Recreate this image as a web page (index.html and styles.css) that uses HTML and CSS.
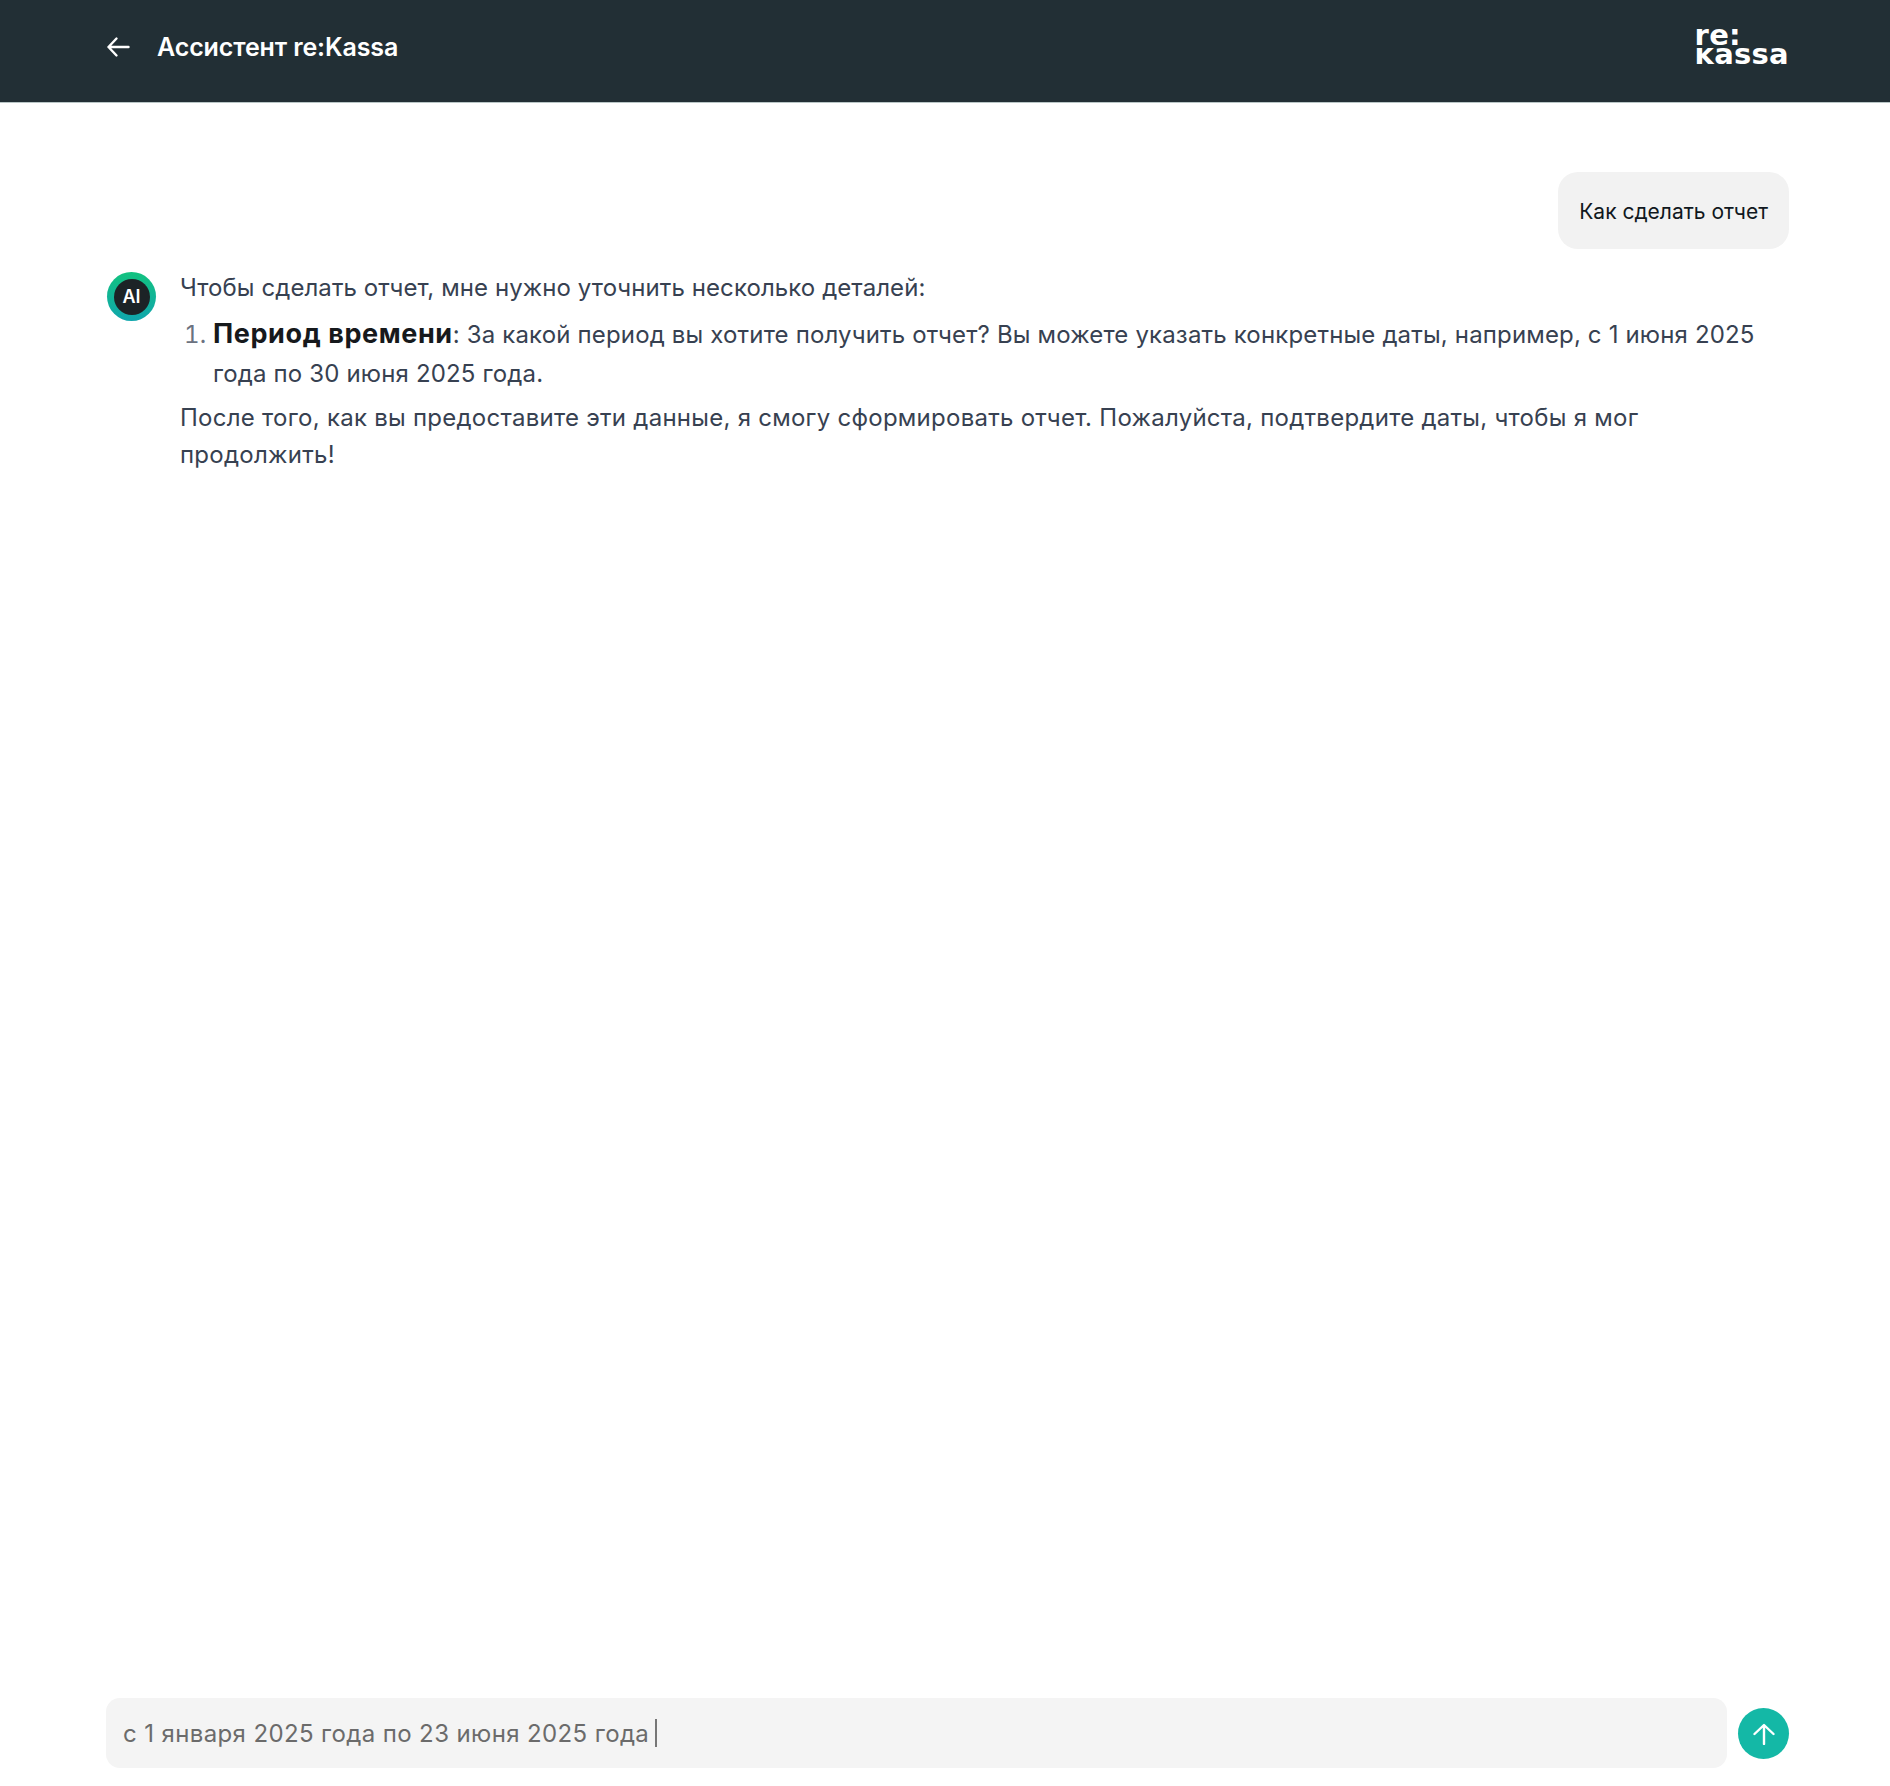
FILE: index.html
```html
<!DOCTYPE html>
<html lang="ru">
<head>
<meta charset="utf-8">
<title>Ассистент re:Kassa</title>
<link rel="stylesheet" href="styles.css">
</head>
<body>
<div class="app">
  <header class="topbar">
    <div class="topbar-left">
      <svg class="back" viewBox="0 0 24 24" width="24" height="24" fill="none" stroke="#fff" stroke-width="2.4" stroke-linecap="round" stroke-linejoin="round"><path d="M22.5 12H2.5M10.5 3.5L2.5 12l8 8.5"/></svg>
      <span class="title">Ассистент re:Kassa</span>
    </div>
    <div class="logo"><span class="logo-line">re:</span><span class="logo-line"><span class="logo-k">k</span>assa</span></div>
  </header>
  <main class="chat">
    <div class="user-row"><div class="bubble">Как сделать отчет</div></div>
    <div class="bot-row">
      <div class="avatar"><span class="avatar-inner">AI</span></div>
      <div class="answer">
        <p class="lead">Чтобы сделать отчет, мне нужно уточнить несколько деталей:</p>
        <ol class="steps">
          <li><strong>Период времени</strong>: За какой период вы хотите получить отчет? Вы можете указать конкретные даты, например, с 1 июня 2025 года по 30 июня 2025 года.</li>
        </ol>
        <p class="tail">После того, как вы предоставите эти данные, я смогу сформировать отчет. Пожалуйста, подтвердите даты, чтобы я мог продолжить!</p>
      </div>
    </div>
  </main>
  <footer class="composer">
    <div class="field"><span>с 1 января 2025 года по 23 июня 2025 года</span><i class="caret"></i></div>
    <button class="send" type="button" aria-label="Отправить">
      <svg viewBox="0 0 24 24" width="24" height="24" fill="none" stroke="#fff" stroke-width="2.4" stroke-linecap="round" stroke-linejoin="round"><path d="M12 23V5M2.5 13L12 4l9.5 9"/></svg>
    </button>
  </footer>
</div>
</body>
</html>
```
FILE: styles.css
```css
* { box-sizing: border-box; }
html, body { margin: 0; padding: 0; background: #fff; }
body { font-family: Inter, "Noto Sans", sans-serif; color: #374151; }
.app { display: flex; flex-direction: column; height: 1786px; }
.topbar {
  height: 103px; flex: none; background: #222f35; border-bottom: 1px solid #b9c6c6;
  padding: 0 101px 0 106px; display: flex; justify-content: space-between; align-items: flex-start;
}
.topbar-left { display: flex; align-items: center; height: 94px; gap: 27px; }
.back { display: block; }
.title { color: #fff; font-size: 25px; font-weight: 600; letter-spacing: -0.12px; }
.logo {
  display: flex; flex-direction: column; color: #fff; font-family: "DejaVu Sans", sans-serif;
  font-weight: 700; font-size: 29px; line-height: 19px; padding-top: 26px; letter-spacing: 0.3px;
}
.logo-line { display: block; height: 19px; }
.logo-k { display: inline-block; clip-path: inset(3px -2px -6px -2px); }
.chat { flex: 1; padding: 69px 101px 0 106px; display: flex; flex-direction: column; gap: 23px; }
.user-row { display: flex; justify-content: flex-end; }
.bubble {
  background: #f2f2f2; border-radius: 20px; color: #101820; font-size: 21px; line-height: 29px;
  padding: 25px 21px 23px;
}
.bot-row { display: flex; gap: 24px; align-items: flex-start; }
.avatar {
  width: 49px; height: 49px; flex: none; border-radius: 50%; padding: 6.5px; margin-left: 1px;
  background: linear-gradient(180deg, #12c27f, #10a6ad);
}
.avatar-inner {
  display: flex; width: 100%; height: 100%; align-items: center; justify-content: center;
  border-radius: 50%; background: #1c2326; color: #fff; font-size: 18px; font-weight: 600;
}
.answer { flex: 1; font-size: 24px; line-height: 37px; padding-right: 26px; }
.lead, .tail { margin: 0; }
.lead { line-height: 32px; letter-spacing: 0.08px; }
.tail { letter-spacing: 0.26px; }
.steps { margin: 10px 0 6px; padding-left: 33px; letter-spacing: 0.16px; }
.steps li { line-height: 39px; }
.steps li::marker { color: #6b7280; }
.steps strong { color: #16191c; font-size: 27px; font-weight: 700; letter-spacing: 0.6px; }
.composer { display: flex; align-items: center; gap: 11px; padding: 0 101px 18px 106px; }
.field {
  flex: 1; height: 70px; border-radius: 14px; background: #f4f4f4; color: #6b6b6b;
  display: flex; align-items: center; padding: 0 17px; font-size: 24px; letter-spacing: 0.38px;
}
.caret { width: 1.5px; height: 28px; background: #777; margin-left: 6px; display: block; }
.send {
  width: 51px; height: 51px; flex: none; border: 0; border-radius: 50%; background: #14b8a6;
  display: flex; align-items: center; justify-content: center; padding: 0;
}
```
